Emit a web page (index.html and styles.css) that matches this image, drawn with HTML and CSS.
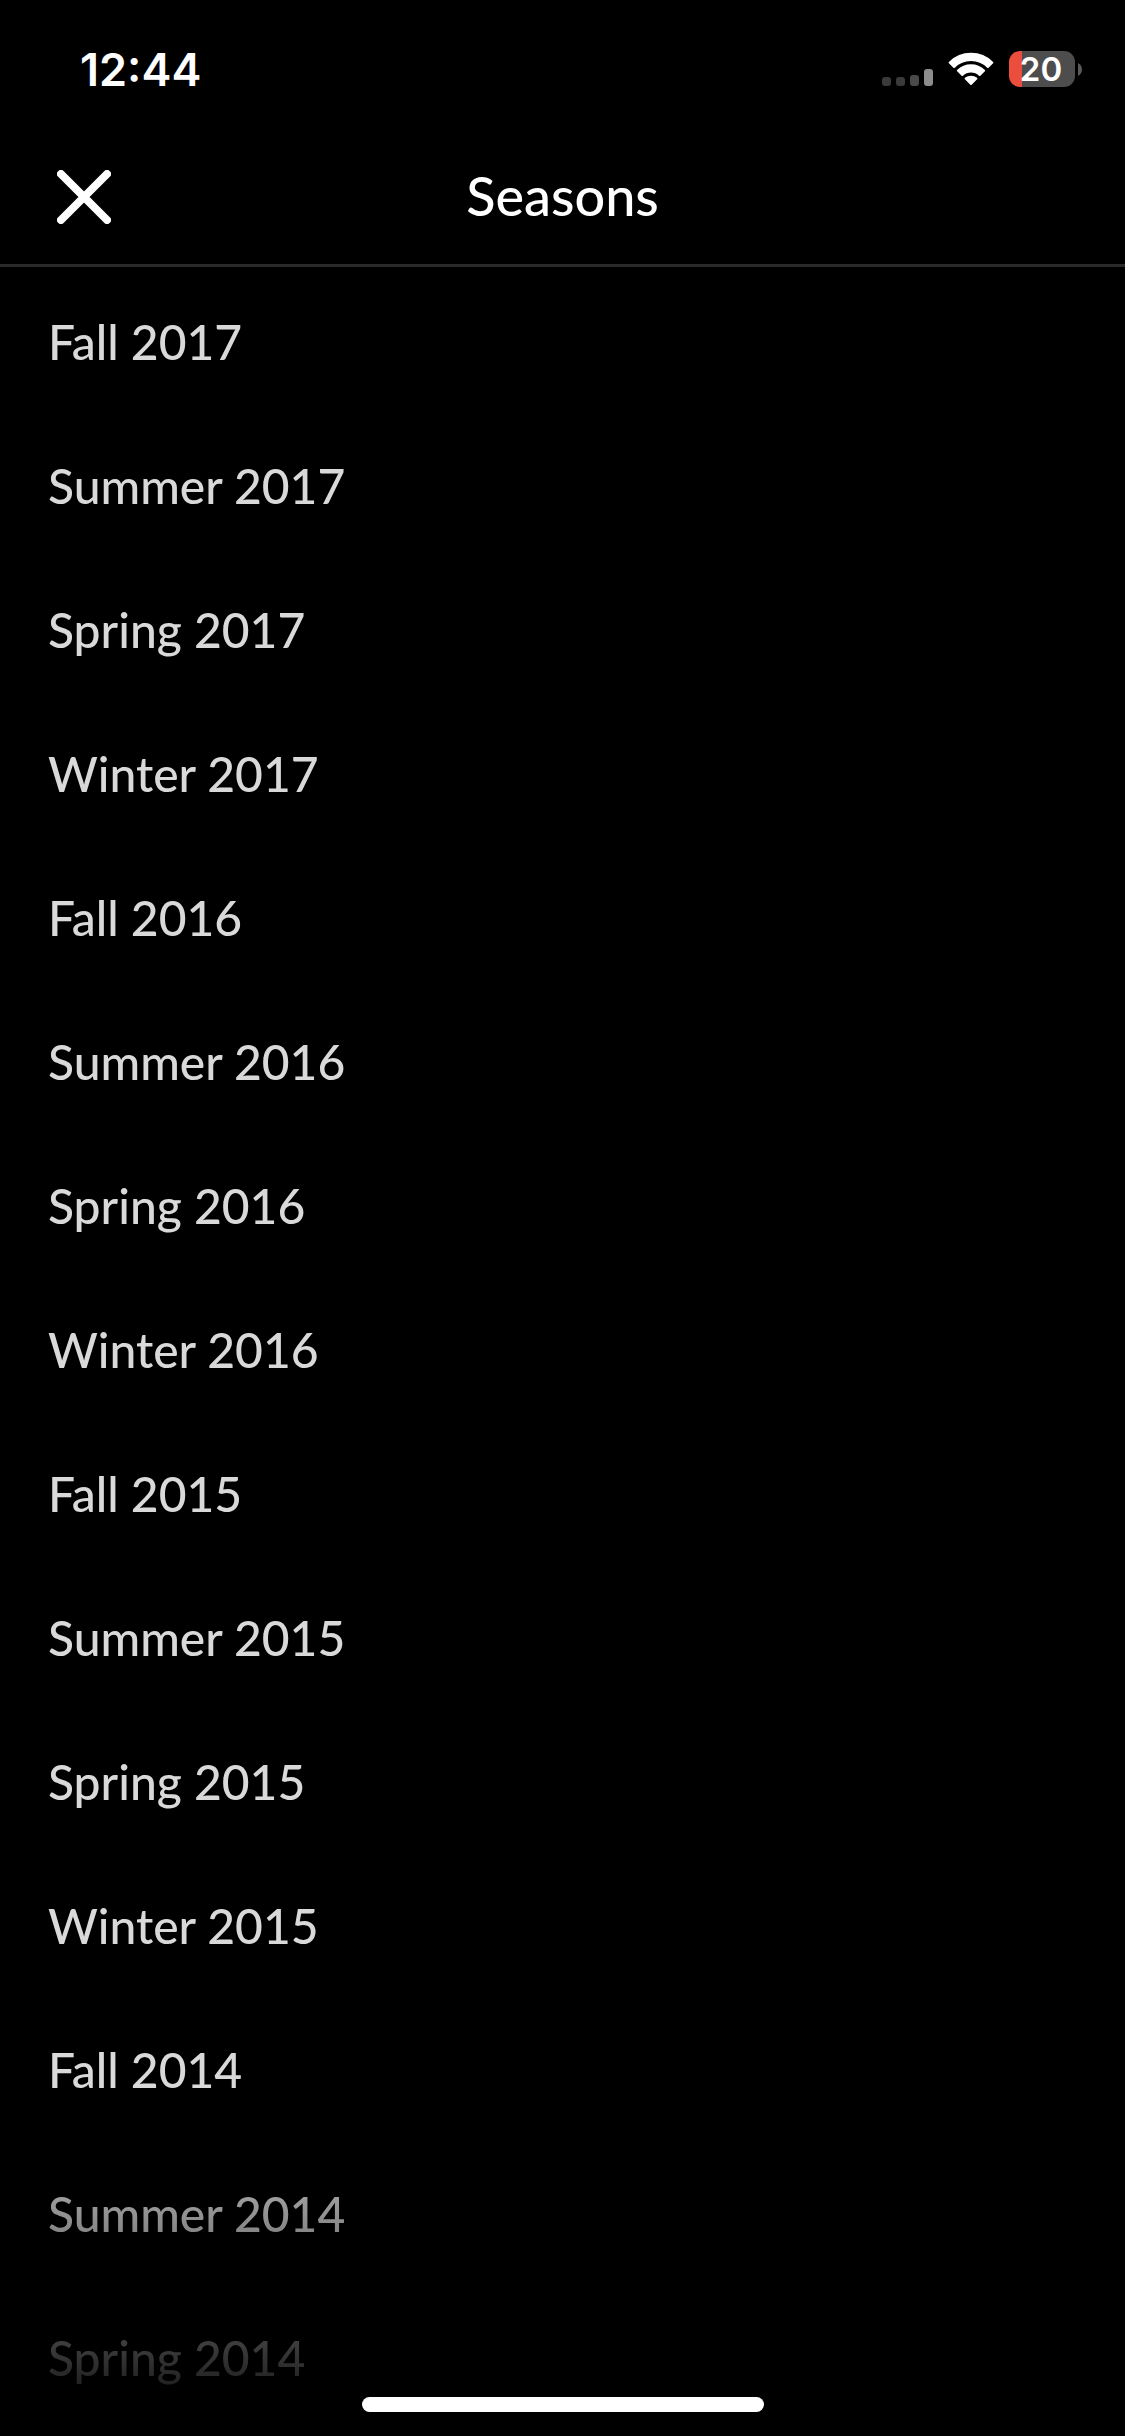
FILE: index.html
```html
<!DOCTYPE html>
<html lang="en">
<head>
    <meta charset="UTF-8">
    <meta name="viewport" content="width=device-width, initial-scale=1.0">
    <title>Seasons</title>
    <link rel="stylesheet" href="styles.css">
</head>
<body>
    <div class="status-bar">
        <span class="time">12:44</span>
        <div class="status-icons">
            <div class="signal">
                <span class="bar"></span>
                <span class="bar"></span>
                <span class="bar mid"></span>
                <span class="bar tall"></span>
            </div>
            <svg class="wifi" width="46" height="34" viewBox="0 0 46 34" fill="#fff" stroke="#fff" stroke-linejoin="round">
                <path stroke-width="2" d="M1.6 10.6 A30.5 30.5 0 0 1 44.4 10.6 L39.9 15 A24 24 0 0 0 6.1 15 Z"/>
                <path stroke-width="2" d="M9.8 18.6 A19 19 0 0 1 36.2 18.6 L31.7 23 A12.5 12.5 0 0 0 14.3 23 Z"/>
                <path stroke-width="2" d="M17.6 26.6 A8.5 8.5 0 0 1 28.4 26.6 L23 32 Z"/>
            </svg>
            <div class="battery">
                <span class="battery-body">20</span>
                <svg class="battery-cap" width="4" height="13" viewBox="0 0 4 13">
                    <path fill="#5a5a5a" d="M0 0 C5.3 2.5 5.3 10.5 0 13 Z"/>
                </svg>
            </div>
        </div>
    </div>

    <header>
        <button class="close" aria-label="Close">
            <svg width="54" height="54" viewBox="0 0 54 54" stroke="#fff" stroke-width="8" stroke-linecap="round">
                <path d="M4 4 L50 50 M50 4 L4 50"/>
            </svg>
        </button>
        <h1>Seasons</h1>
    </header>

    <!-- Season list, fades out towards the bottom -->
    <ul class="seasons">
        <li><button>Fall 2017</button></li>
        <li><button>Summer 2017</button></li>
        <li><button>Spring 2017</button></li>
        <li><button>Winter 2017</button></li>
        <li><button>Fall 2016</button></li>
        <li><button>Summer 2016</button></li>
        <li><button>Spring 2016</button></li>
        <li><button>Winter 2016</button></li>
        <li><button>Fall 2015</button></li>
        <li><button>Summer 2015</button></li>
        <li><button>Spring 2015</button></li>
        <li><button>Winter 2015</button></li>
        <li><button>Fall 2014</button></li>
        <li><button>Summer 2014</button></li>
        <li><button>Spring 2014</button></li>
    </ul>

    <div class="home-indicator"></div>
</body>
</html>
```
FILE: styles.css
```css
* {
    box-sizing: border-box;
}
body {
    font-family: Lato, sans-serif;
    font-weight: 500;
    margin: 0;
    display: flex;
    flex-direction: column;
    height: 100vh;
    overflow: hidden;
    background-color: #000;
    color: #fff;
}
button {
    font: inherit;
    color: inherit;
    background: none;
    border: none;
    padding: 0;
    cursor: pointer;
}
svg {
    display: block;
    fill: none;
}
.status-bar {
    flex: none;
    display: flex;
    justify-content: space-between;
    align-items: center;
    height: 132px;
    padding: 6px 43px 0 80px;
    font-family: Inter, sans-serif;
    font-weight: 600;
}
.time {
    font-size: 45px;
}
.status-icons {
    display: flex;
    align-items: center;
    gap: 15px;
}
.signal {
    display: flex;
    align-items: flex-end;
    gap: 5px;
    height: 33px;
}
.bar {
    width: 9px;
    height: 9px;
    border-radius: 3px;
    background-color: #3a3a3a;
}
.bar.mid {
    height: 11px;
    background-color: #4a4a4a;
}
.bar.tall {
    height: 17px;
    background-color: #8c8c8c;
}
.wifi {
    fill: #fff;
}
.battery {
    display: flex;
    align-items: center;
    gap: 3px;
}
.battery-body {
    width: 66px;
    height: 36px;
    padding-right: 2px;
    border-radius: 11px;
    background: linear-gradient(to right, #eb4e3d 13px, #4d4d4d 13px);
    font-size: 33px;
    line-height: 36px;
    text-align: center;
}
header {
    flex: none;
    display: grid;
    grid-template-columns: 1fr auto 1fr;
    align-items: center;
    height: 135px;
    padding: 0 57px 2px;
    border-bottom: 3px solid #2a2a2a;
}
.close {
    justify-self: start;
}
h1 {
    margin: 0;
    padding-bottom: 3px;
    font-size: 54px;
    font-weight: 500;
}
.seasons {
    flex: 1;
    min-height: 0;
    margin: 0;
    padding: 2px 0 0;
    overflow: hidden;
    list-style: none;
    color: #d9d9d9;
    font-size: 48px;
    -webkit-mask-image: linear-gradient(to top, transparent, #000 330px);
    mask-image: linear-gradient(to top, transparent, #000 330px);
}
.seasons button {
    display: block;
    width: 100%;
    height: 144px;
    padding: 0 48px;
    text-align: left;
}
.home-indicator {
    position: fixed;
    bottom: 24px;
    left: 50%;
    transform: translateX(-50%);
    width: 402px;
    height: 15px;
    border-radius: 8px;
    background-color: #fff;
}
```
